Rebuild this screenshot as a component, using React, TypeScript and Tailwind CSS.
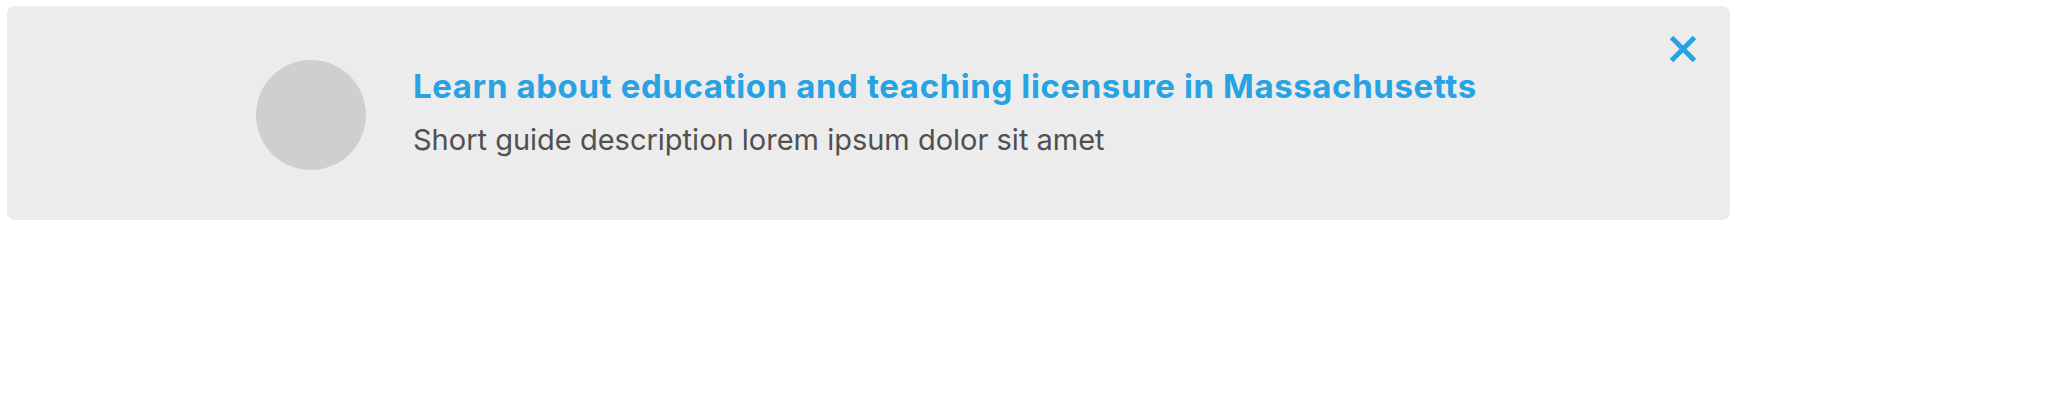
export default function App() {
  return (
    <div className="w-full bg-white pt-[6px] pl-[7px] font-['Inter','Noto_Sans',sans-serif]">
      <div className="relative w-[1723px] h-[214px] rounded-[8px] bg-[#ececec] flex items-center pl-[249px]">
        <div className="w-[110px] h-[110px] rounded-full bg-[#cfcfcf] shrink-0 mt-[4px]" />
        <div className="ml-[47px] flex flex-col mb-[2px]">
          <h2 className="text-[33px] leading-[40px] font-bold text-[#27a2e3] tracking-[0.6px]">
            Learn about education and teaching licensure in Massachusetts
          </h2>
          <p className="mt-[16px] text-[29px] leading-[36px] text-[#505050]">
            Short guide description lorem ipsum dolor sit amet
          </p>
        </div>
        <button className="absolute top-[29px] right-[33px] text-[#27a2e3]">
          <svg width="28" height="28" viewBox="0 0 28 28" fill="none" stroke="currentColor" strokeWidth="5">
            <line x1="2.5" y1="2.5" x2="25.5" y2="25.5" />
            <line x1="25.5" y1="2.5" x2="2.5" y2="25.5" />
          </svg>
        </button>
      </div>
    </div>
  );
}
